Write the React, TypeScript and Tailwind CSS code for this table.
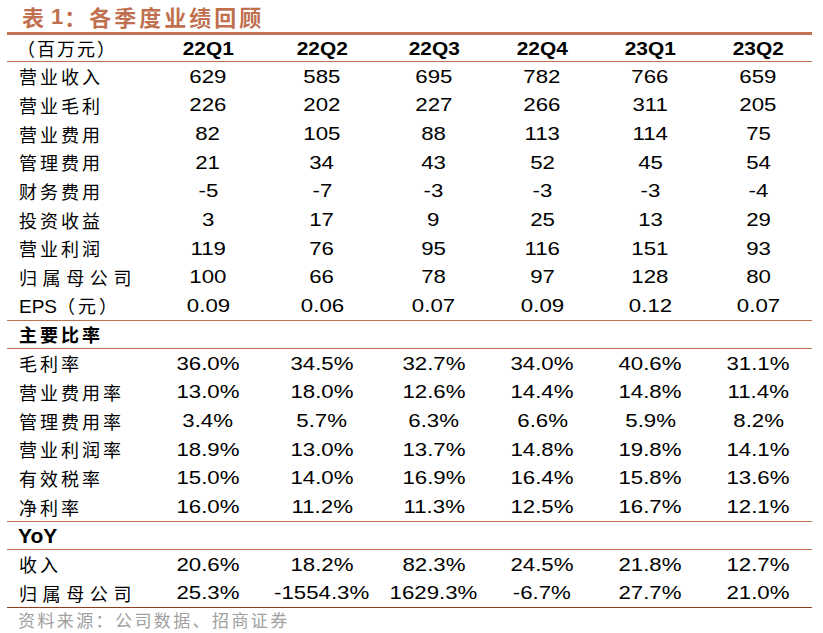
import React from "react";

const widths = ["w-[114px]", "w-[114px]", "w-[109.5px]", "w-[107.5px]", "w-[108.5px]", "w-[107.5px]"];
const quarters = ["22Q1", "22Q2", "22Q3", "22Q4", "23Q1", "23Q2"];

type Row = { label: string; wide?: boolean; vals: string[] };

const block1: Row[] = [
  { label: "营业收入", vals: ["629", "585", "695", "782", "766", "659"] },
  { label: "营业毛利", vals: ["226", "202", "227", "266", "311", "205"] },
  { label: "营业费用", vals: ["82", "105", "88", "113", "114", "75"] },
  { label: "管理费用", vals: ["21", "34", "43", "52", "45", "54"] },
  { label: "财务费用", vals: ["-5", "-7", "-3", "-3", "-3", "-4"] },
  { label: "投资收益", vals: ["3", "17", "9", "25", "13", "29"] },
  { label: "营业利润", vals: ["119", "76", "95", "116", "151", "93"] },
  { label: "归属母公司", wide: true, vals: ["100", "66", "78", "97", "128", "80"] },
];

const block2: Row[] = [
  { label: "毛利率", vals: ["36.0%", "34.5%", "32.7%", "34.0%", "40.6%", "31.1%"] },
  { label: "营业费用率", vals: ["13.0%", "18.0%", "12.6%", "14.4%", "14.8%", "11.4%"] },
  { label: "管理费用率", vals: ["3.4%", "5.7%", "6.3%", "6.6%", "5.9%", "8.2%"] },
  { label: "营业利润率", vals: ["18.9%", "13.0%", "13.7%", "14.8%", "19.8%", "14.1%"] },
  { label: "有效税率", vals: ["15.0%", "14.0%", "16.9%", "16.4%", "15.8%", "13.6%"] },
  { label: "净利率", vals: ["16.0%", "11.2%", "11.3%", "12.5%", "16.7%", "12.1%"] },
];

const block3: Row[] = [
  { label: "收入", vals: ["20.6%", "18.2%", "82.3%", "24.5%", "21.8%", "12.7%"] },
  { label: "归属母公司", wide: true, vals: ["25.3%", "-1554.3%", "1629.3%", "-6.7%", "27.7%", "21.0%"] },
];

const CJK = "font-['Noto_Sans_CJK_SC',sans-serif]";
const LAT = "font-['Liberation_Sans',Arial,sans-serif]";

function Cells({ vals, bold }: { vals: string[]; bold?: boolean }) {
  return (
    <>
      {vals.map((v, i) => (
        <div key={i} className={`${widths[i]} shrink-0 flex justify-center`}>
          <span
            className={`inline-block ${bold ? "scale-x-[1.1] font-bold" : "scale-x-[1.17]"} ${LAT} text-[19px] leading-none`}
          >
            {v}
          </span>
        </div>
      ))}
    </>
  );
}

function DataRow({ row, h }: { row: Row; h: string }) {
  return (
    <div className={`flex items-center ${h}`}>
      <div
        className={`w-[144px] shrink-0 pl-[12px] ${CJK} text-[18px] leading-none ${row.wide ? "tracking-[5.6px]" : "tracking-[3px]"}`}
      >
        {row.label}
      </div>
      <Cells vals={row.vals} />
    </div>
  );
}

export default function App() {
  return (
    <div className="w-[823px] h-[633px] bg-white text-black overflow-hidden">
      <div className="ml-[7px] w-[805px]">
        <div className={`h-[32px] flex items-center pl-[15px] ${CJK} text-[22px] font-bold text-[#c0704f] tracking-[1px]`}>
          表 <span className={`${LAT} font-bold ml-[6px]`}>1</span>：<span className="ml-[2px] tracking-[3px]">各季度业绩回顾</span>
        </div>
        <div className="h-[3px] bg-[#c47355]" />
        <div className="h-[26px] flex items-center border-b border-[#c0704f] box-content">
          <div className={`w-[144px] shrink-0 pl-[10px] ${CJK} text-[18px] leading-none tracking-[2px]`}>（百万元）</div>
          <Cells vals={quarters} bold />
        </div>
        <div className="border-b border-[#c0704f]">
          {block1.map((r) => (
            <DataRow key={r.label} row={r} h="h-[28.67px]" />
          ))}
          <div className="flex items-center h-[28.67px]">
            <div className="w-[144px] shrink-0 pl-[12px] text-[18px] leading-none">
              <span className={`${LAT} text-[19px]`}>EPS</span>
              <span className={`${CJK} tracking-[3px]`}>（元）</span>
            </div>
            <Cells vals={["0.09", "0.06", "0.07", "0.09", "0.12", "0.07"]} />
          </div>
        </div>
        <div
          className={`h-[28px] flex items-center pl-[12px] border-b border-[#c0704f] ${CJK} text-[18px] font-bold tracking-[3px] leading-none`}
        >
          主要比率
        </div>
        <div className="border-b border-[#c0704f]">
          {block2.map((r) => (
            <DataRow key={r.label} row={r} h="h-[28.67px]" />
          ))}
        </div>
        <div className={`h-[28px] flex items-center pl-[11px] border-b border-[#c0704f] ${LAT} text-[21px] font-bold leading-none`}>
          YoY
        </div>
        <div className="border-b border-[#8f3f20]">
          {block3.map((r) => (
            <DataRow key={r.label} row={r} h="h-[28.5px]" />
          ))}
        </div>
        <div className={`h-[23px] flex items-center pl-[11px] ${CJK} text-[17px] text-[#a0a0a0] tracking-[2.4px] leading-none`}>
          资料来源：公司数据、招商证券
        </div>
      </div>
    </div>
  );
}
